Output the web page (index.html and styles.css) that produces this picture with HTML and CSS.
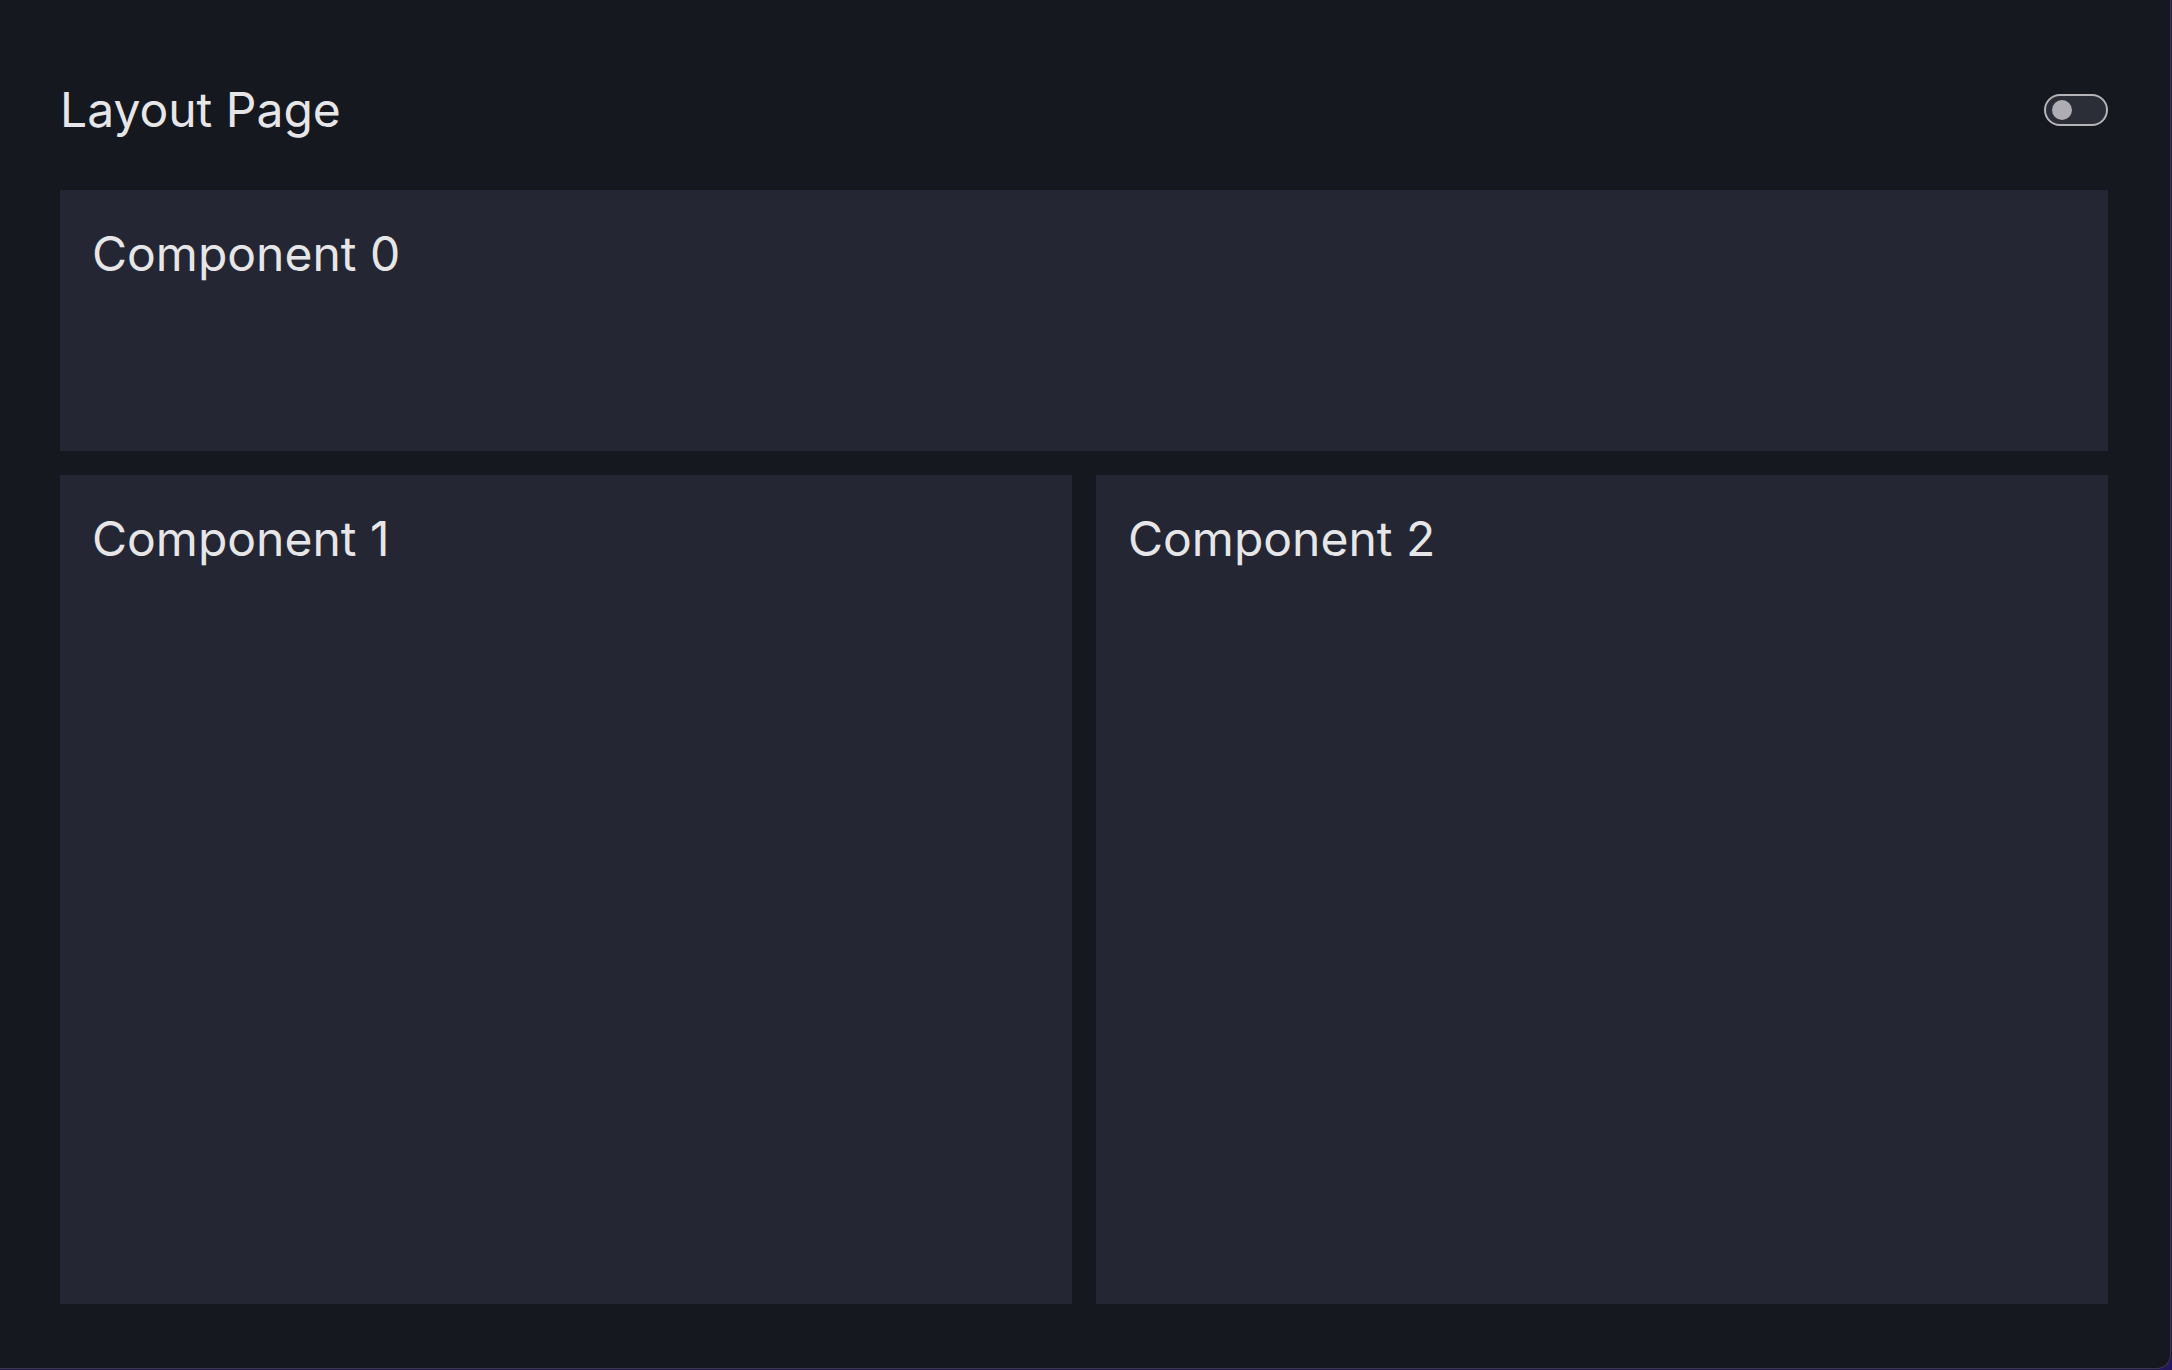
FILE: index.html
```html
<!DOCTYPE html>
<html lang="en">
<head>
<meta charset="utf-8">
<title>Layout Page</title>
<link rel="stylesheet" href="styles.css">
</head>
<body>
<div class="frame">
  <header class="header">
    <h1 class="title">Layout Page</h1>
    <div class="toggle" role="switch" aria-checked="false"><span class="knob"></span></div>
  </header>
  <main class="grid">
    <section class="card card-wide"><h2 class="card-title">Component 0</h2></section>
    <section class="card"><h2 class="card-title">Component 1</h2></section>
    <section class="card"><h2 class="card-title">Component 2</h2></section>
  </main>
</div>
</body>
</html>
```
FILE: styles.css
```css
html, body {
  margin: 0;
  padding: 0;
}
body {
  background: #24175e;
  width: 2172px;
  height: 1370px;
  overflow: hidden;
  font-family: Inter, "Liberation Sans", sans-serif;
}
.frame {
  box-sizing: border-box;
  width: 2171px;
  height: 1369px;
  background: #161820;
  border-right: 1px solid #3a3c45;
  border-bottom: 1px solid #3a3c45;
  border-bottom-right-radius: 14px;
  padding: 81px 62px 64px 60px;
  display: flex;
  flex-direction: column;
}
.header {
  display: flex;
  align-items: center;
  justify-content: space-between;
  height: 58px;
  margin-bottom: 51px;
}
.title {
  margin: 0;
  font-size: 48px;
  line-height: 58px;
  font-weight: 400;
  color: #e6e6e8;
}
.toggle {
  box-sizing: border-box;
  width: 64px;
  height: 32px;
  border: 2px solid #b3b3b8;
  border-radius: 16px;
  background: #2b2d37;
  display: flex;
  align-items: center;
  padding-left: 6px;
  margin-top: 0;
}
.knob {
  width: 20px;
  height: 20px;
  border-radius: 50%;
  background: #adadb3;
}
.grid {
  flex: 1;
  display: grid;
  grid-template-columns: 1fr 1fr;
  grid-template-rows: 261px 1fr;
  gap: 24px;
}
.card {
  background: #242633;
  padding: 35px 32px;
}
.card-wide {
  grid-column: 1 / 3;
}
.card-title {
  margin: 0;
  font-size: 48px;
  line-height: 58px;
  font-weight: 400;
  color: #e6e6e8;
}
```
